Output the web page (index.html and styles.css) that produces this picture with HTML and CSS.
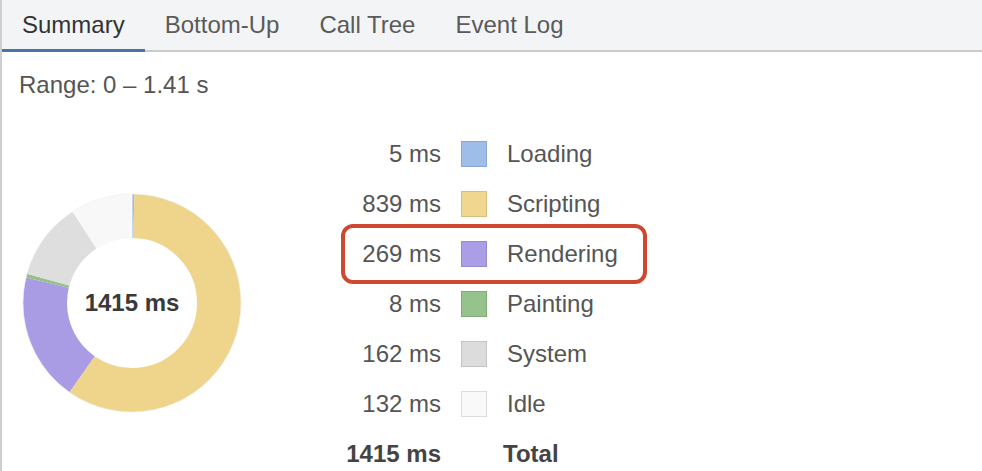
FILE: index.html
```html
<!DOCTYPE html>
<html lang="en">
<head>
<meta charset="utf-8">
<title>Summary</title>
<link rel="stylesheet" href="styles.css">
</head>
<body>
<div class="panel">
  <div class="tabbar">
    <div class="tab active">Summary</div>
    <div class="tab">Bottom-Up</div>
    <div class="tab">Call Tree</div>
    <div class="tab">Event Log</div>
  </div>
  <div class="content">
    <div class="range">Range: 0 – 1.41 s</div>
    <div class="summary">
      <div class="chart">
        <svg class="donut" width="220" height="220" viewBox="0 0 220 220">
          <g transform="rotate(-90 110 110)" fill="none" stroke-width="44">
            <circle cx="110" cy="110" r="87" stroke="#9bbbe8" stroke-dasharray="1.93 546.64" stroke-dashoffset="0"/>
            <circle cx="110" cy="110" r="87" stroke="#efd48c" stroke-dasharray="324.12 546.64" stroke-dashoffset="-1.93"/>
            <circle cx="110" cy="110" r="87" stroke="#a99ce5" stroke-dasharray="103.92 546.64" stroke-dashoffset="-326.05"/>
            <circle cx="110" cy="110" r="87" stroke="#94c18a" stroke-dasharray="3.09 546.64" stroke-dashoffset="-429.97"/>
            <circle cx="110" cy="110" r="87" stroke="#dedede" stroke-dasharray="62.58 546.64" stroke-dashoffset="-433.06"/>
            <circle cx="110" cy="110" r="87" stroke="#f8f8f8" stroke-dasharray="50.99 546.64" stroke-dashoffset="-495.64"/>
          </g>
          <circle cx="110" cy="110" r="109" fill="none" stroke="#efefef" stroke-width="0.6"/>
          <line x1="110" y1="1" x2="110" y2="45" stroke="#ffffff" stroke-width="0.8"/>
        </svg>
        <div class="total-center">1415 ms</div>
      </div>
      <div class="legend">
        <div class="row"><span class="val">5 ms</span><span class="sw loading"></span><span class="lbl">Loading</span></div>
        <div class="row"><span class="val">839 ms</span><span class="sw scripting"></span><span class="lbl">Scripting</span></div>
        <div class="row highlight"><span class="val">269 ms</span><span class="sw rendering"></span><span class="lbl">Rendering</span></div>
        <div class="row"><span class="val">8 ms</span><span class="sw painting"></span><span class="lbl">Painting</span></div>
        <div class="row"><span class="val">162 ms</span><span class="sw system"></span><span class="lbl">System</span></div>
        <div class="row"><span class="val">132 ms</span><span class="sw idle"></span><span class="lbl">Idle</span></div>
        <div class="row total"><span class="val">1415 ms</span><span class="sw none"></span><span class="lbl">Total</span></div>
      </div>
    </div>
  </div>
</div>
</body>
</html>
```

FILE: styles.css
```css
html, body {
  margin: 0;
  padding: 0;
  background: #ffffff;
  overflow: hidden;
}

body {
  font-family: "Liberation Sans", Arial, Helvetica, sans-serif;
  font-size: 24px;
  color: #555555;
}

.panel {
  height: 471px;
  border-left: 2px solid #cfcfcf;
  overflow: hidden;
}

.tabbar {
  display: flex;
  height: 50px;
  background: #f3f4f6;
  border-bottom: 2px solid #cbcbcb;
}

.tab {
  padding: 0 20px;
  height: 50px;
  line-height: 50px;
  color: #5a5a5a;
  white-space: nowrap;
}

.tab.active {
  color: #333333;
  height: 49px;
  border-bottom: 3px solid #4d72a6;
  line-height: 50px;
}

.content {
  padding-left: 17px;
}

.range {
  margin-top: 18px;
  line-height: 30px;
  height: 30px;
  color: #555555;
}

.summary {
  display: flex;
  margin-top: 29px;
}

.chart {
  position: relative;
  width: 220px;
  height: 220px;
  margin-top: 64px;
  margin-left: 3px;
  flex: none;
}

.donut {
  display: block;
}

.total-center {
  position: absolute;
  inset: 0;
  display: flex;
  align-items: center;
  justify-content: center;
  font-weight: bold;
  color: #3a3a3a;
}

.legend {
  margin-left: 99px;
  display: flex;
  flex-direction: column;
}

.row {
  display: grid;
  grid-template-columns: 100px 26px auto;
  column-gap: 20px;
  align-items: center;
  height: 50px;
  line-height: 50px;
  white-space: nowrap;
}

.val {
  text-align: right;
}

.sw {
  width: 24px;
  height: 24px;
  border: 1px solid transparent;
  margin-top: -1px;
}

.sw.loading { background: #9ebde9; border-color: #8aa7d2; }
.sw.scripting { background: #f0d68e; border-color: #d7bf7e; }
.sw.rendering { background: #ab9ee6; border-color: #968bcf; }
.sw.painting { background: #96c28c; border-color: #80ac77; }
.sw.system { background: #dcdcdc; border-color: #c4c4c4; }
.sw.idle { background: #f9f9f9; border-color: #dcdcdc; }
.sw.none { background: transparent; border-color: transparent; }

.lbl {
  color: #555555;
}

.row.total {
  font-weight: bold;
  color: #444444;
}

.row.total .lbl {
  color: #444444;
  margin-left: -4px;
}

.row.highlight {
  position: relative;
}

.row.highlight::after {
  content: "";
  position: absolute;
  left: 0;
  top: -5px;
  width: 298px;
  height: 52px;
  border: 4px solid #cd4731;
  border-radius: 12px;
}
```
